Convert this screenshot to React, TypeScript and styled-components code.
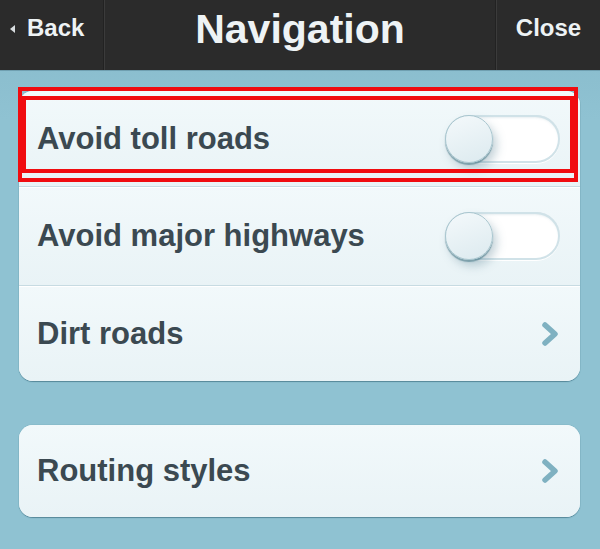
import React from "react";
import styled, { createGlobalStyle } from "styled-components";

const GlobalStyle = createGlobalStyle`
  html, body {
    margin: 0;
    padding: 0;
    background: #8ec0d0;
  }
  body {
    font-family: "Liberation Sans", Arial, sans-serif;
  }
`;

const Page = styled.div`
  width: 600px;
  height: 549px;
  background: linear-gradient(#86b9ca, #8fc2d2 120px, #8fc2d2);
  overflow: hidden;
`;

const Header = styled.header`
  height: 70px;
  display: grid;
  grid-template-columns: 103px 2px 1fr 2px 103px;
  background: #2b2b2b;
  color: #eef3f5;
  box-shadow: 0 1px 0 #6f9fb0;
`;

const Divider = styled.div`
  background: #3b3b3b;
  border-left: 1px solid #222;
`;

const HeaderButton = styled.div<{ $align?: "left" | "center" }>`
  display: flex;
  align-items: center;
  justify-content: ${(p) => (p.$align === "left" ? "flex-start" : "center")};
  padding: 0 0 14px ${(p) => (p.$align === "left" ? "10px" : "0")};
  font-size: 24px;
  font-weight: bold;
  gap: 12px;
`;

const BackArrow = styled.span`
  width: 0;
  height: 0;
  border-top: 4px solid transparent;
  border-bottom: 4px solid transparent;
  border-right: 5px solid #d8dde0;
  margin-top: 2px;
`;

const Title = styled.h1`
  margin: 0;
  display: flex;
  align-items: center;
  justify-content: center;
  padding-bottom: 12px;
  font-size: 41px;
  font-weight: bold;
`;

const Content = styled.main`
  display: flex;
  flex-direction: column;
  gap: 44px;
  padding: 21px 20px 0 19px;
`;

const Card = styled.section`
  background: linear-gradient(#f1f8fb, #e9f3f6);
  border-radius: 14px;
  box-shadow: 0 1px 1px rgba(50, 100, 120, 0.6), 0 0 0 1px rgba(120, 170, 185, 0.25);
`;

const Row = styled.div<{ $first?: boolean; $height?: number }>`
  position: relative;
  height: ${(p) => p.$height ?? 96}px;
  display: flex;
  align-items: center;
  justify-content: space-between;
  padding: 0 20px 0 18px;
  border-top: ${(p) => (p.$first ? "none" : "1px solid #c7dbe2")};
  box-shadow: ${(p) => (p.$first ? "none" : "inset 0 1px 0 #ffffff")};
  background: linear-gradient(#f2f9fb, #e9f3f6);
  &:first-child {
    border-radius: 14px 14px 0 0;
  }
  &:last-child {
    border-radius: 0 0 14px 14px;
  }
  &:only-child {
    border-radius: 14px;
  }
`;

const Label = styled.span`
  font-size: 31px;
  font-weight: bold;
  color: #3b4951;
`;

const Track = styled.div`
  position: relative;
  width: 115px;
  height: 48px;
  border-radius: 24px;
  background: #ffffff;
  box-shadow: inset 0 0 0 2px #d0e2e8, inset 0 2px 3px rgba(120, 160, 175, 0.35),
    0 1px 0 #ffffff;
`;

const Knob = styled.div`
  position: absolute;
  left: 0;
  top: 0;
  width: 48px;
  height: 48px;
  border-radius: 50%;
  box-sizing: border-box;
  background: linear-gradient(160deg, #f4f9fb, #dceaef);
  border: 1px solid #a9c6cf;
  box-shadow: 0 2px 1px rgba(70, 120, 135, 0.6), 4px 6px 10px rgba(90, 130, 145, 0.35);
`;

const Highlight = styled.div<{ $top: number; $left: number; $w: number; $h: number }>`
  position: absolute;
  top: ${(p) => p.$top}px;
  left: ${(p) => p.$left}px;
  width: ${(p) => p.$w}px;
  height: ${(p) => p.$h}px;
  box-sizing: border-box;
  border: 4px solid #f00c10;
  pointer-events: none;
`;

const Toggle = () => (
  <Track>
    <Knob />
  </Track>
);

const Chevron = () => (
  <svg width="20" height="26" viewBox="0 0 20 26">
    <path
      d="M5 4 L15 13 L5 22"
      fill="none"
      stroke="#7fb1c1"
      strokeWidth="5.5"
      strokeLinecap="round"
      strokeLinejoin="round"
    />
  </svg>
);

const App = () => {
  return (
    <Page>
      <GlobalStyle />
      <Header>
        <HeaderButton $align="left">
          <BackArrow />
          Back
        </HeaderButton>
        <Divider />
        <Title>Navigation</Title>
        <Divider />
        <HeaderButton>Close</HeaderButton>
      </Header>
      <Content>
        <Card>
          <Row $first $height={95}>
            <Label>Avoid toll roads</Label>
            <Toggle />
            <Highlight $top={-4} $left={-1} $w={560} $h={95} />
            <Highlight $top={5} $left={3} $w={552} $h={77} />
          </Row>
          <Row $height={98}>
            <Label>Avoid major highways</Label>
            <Toggle />
          </Row>
          <Row $height={95}>
            <Label>Dirt roads</Label>
            <Chevron />
          </Row>
        </Card>
        <Card>
          <Row $first $height={92}>
            <Label>Routing styles</Label>
            <Chevron />
          </Row>
        </Card>
      </Content>
    </Page>
  );
};

export default App;
